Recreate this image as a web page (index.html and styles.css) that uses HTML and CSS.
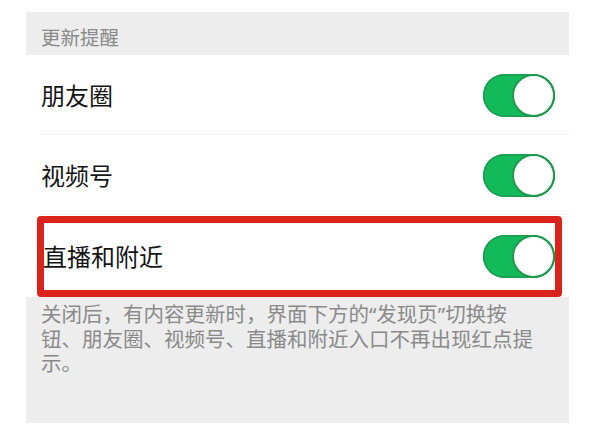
FILE: index.html
```html
<!DOCTYPE html>
<html lang="zh-CN">
<head>
<meta charset="utf-8">
<title>更新提醒</title>
<link rel="stylesheet" href="styles.css">
</head>
<body>
<div class="panel">
  <div class="section-title">更新提醒</div>
  <div class="row">
    <span class="label">朋友圈</span>
    <span class="switch"><span class="knob"></span></span>
  </div>
  <div class="row">
    <span class="label">视频号</span>
    <span class="switch"><span class="knob"></span></span>
  </div>
  <div class="row row-last highlighted">
    <span class="label">直播和附近</span>
    <span class="switch"><span class="knob"></span></span>
    <span class="mark"></span>
  </div>
  <div class="footer">
    <p class="note">关闭后，有内容更新时，界面下方的“发现页”切换按<br>钮、朋友圈、视频号、直播和附近入口不再出现红点提<br>示。</p>
  </div>
</div>
</body>
</html>
```
FILE: styles.css
```css
* { box-sizing: border-box; }
html, body {
  margin: 0;
  padding: 0;
  background: #ffffff;
  font-family: "Noto Sans CJK SC", "Noto Sans", sans-serif;
}
.panel {
  margin: 12px 0 0 26px;
  width: 543px;
}
.section-title {
  height: 43px;
  background: #ededed;
  color: #8a8a8a;
  font-size: 19.5px;
  line-height: 24px;
  padding: 7px 0 0 15px;
  display: flex;
  align-items: center;
}
.row {
  height: 80px;
  display: flex;
  align-items: center;
  justify-content: space-between;
  padding: 0 14px 0 15px;
  position: relative;
  background: #ffffff;
}
.row::after {
  content: "";
  position: absolute;
  left: 14px;
  right: 0;
  bottom: 0;
  height: 1px;
  background: #efefef;
}
.row-last::after { display: none; }
.row-last { height: 82px; }
.label {
  color: #151515;
  font-size: 24px;
  line-height: 30px;
}
.highlighted .label { margin-left: 2px; }
.switch {
  width: 72px;
  height: 43px;
  border-radius: 22px;
  background: #12ba5a;
  box-shadow: inset 0 0 0 1.5px #1d9a4f;
  display: flex;
  justify-content: flex-end;
  align-items: center;
}
.knob {
  width: 43px;
  height: 43px;
  border-radius: 50%;
  background: #ffffff;
  border: 2px solid #1f9a50;
}
.mark {
  position: absolute;
  left: 11px;
  right: 7px;
  top: 1px;
  bottom: 0;
  border: 7px solid #d9231b;
  border-radius: 4px;
}
.footer {
  background: #ededed;
  height: 126px;
  padding: 5px 10px 0 15px;
}
.note {
  margin: 0;
  color: #8a8a8a;
  font-family: "Noto Sans", "Noto Sans CJK SC", sans-serif;
  font-size: 20.5px;
  line-height: 24.5px;
}
```
